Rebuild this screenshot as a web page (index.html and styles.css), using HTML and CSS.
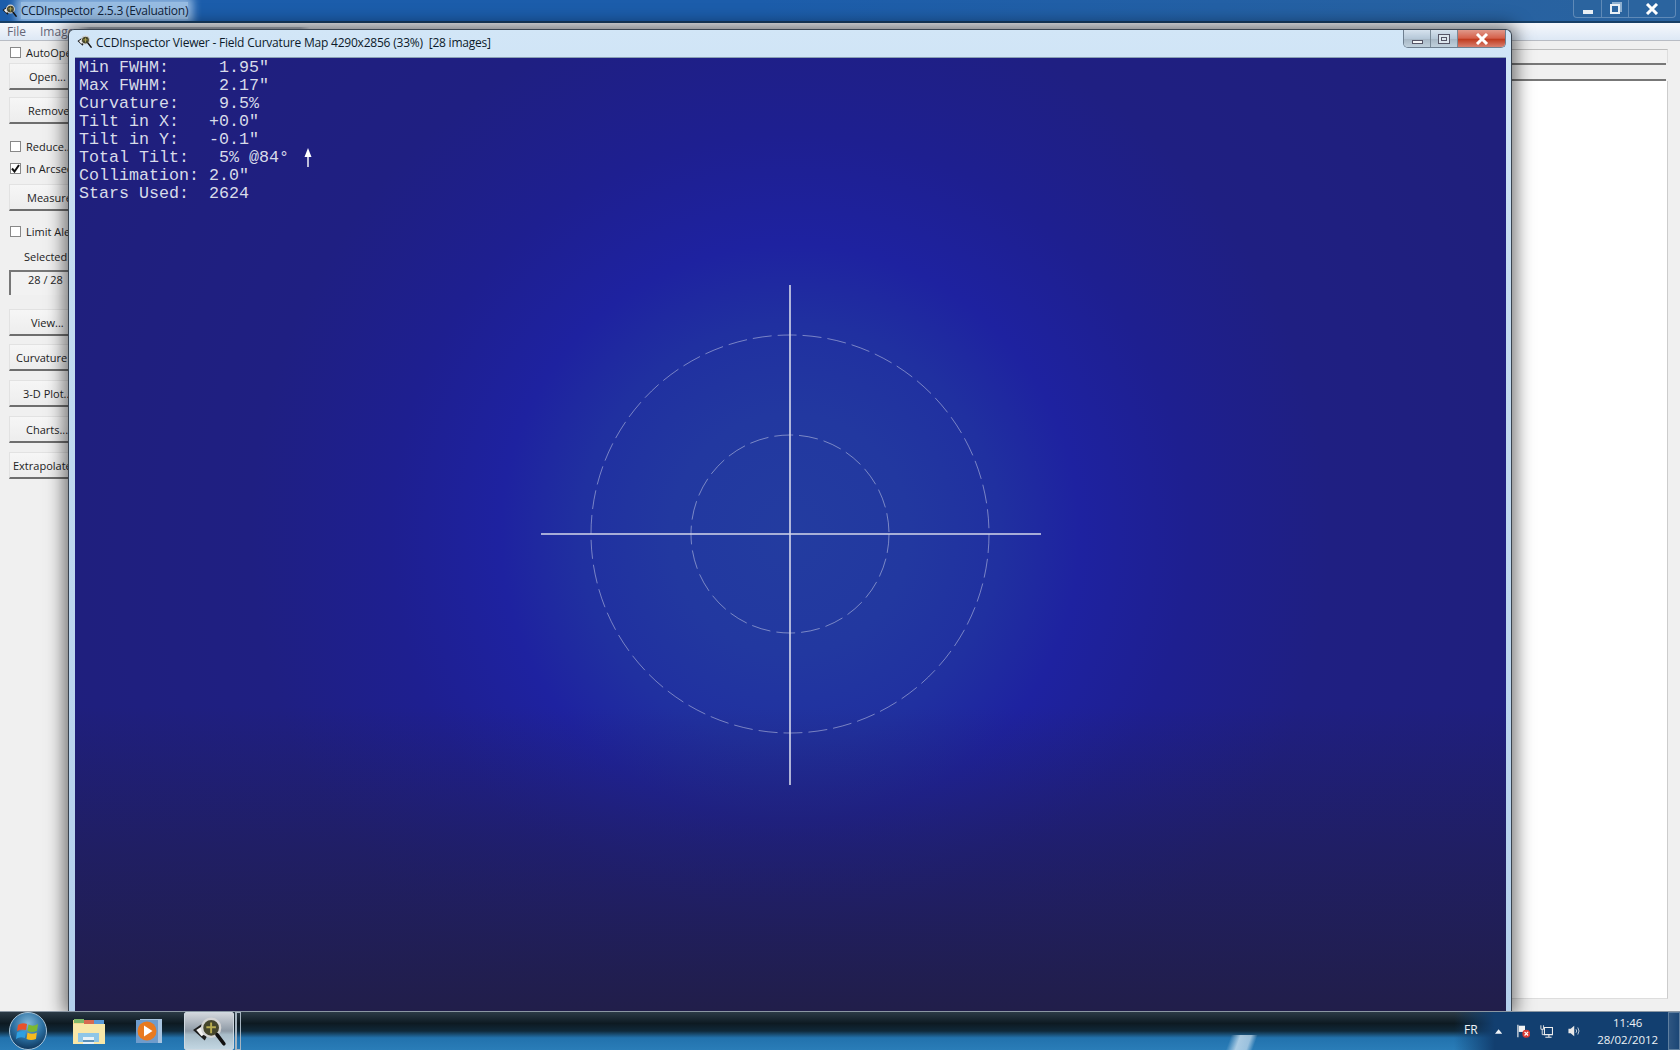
FILE: index.html
```html
<!DOCTYPE html>
<html lang="en">
<head>
<meta charset="utf-8">
<title>CCDInspector</title>
<link rel="stylesheet" href="styles.css">
</head>
<body>
<svg class="defs" width="0" height="0" aria-hidden="true">
  <symbol id="appicon" viewBox="0 0 32 32">
    <path d="M1 15 L14 6 L21 8 L12 25 Z" fill="#1c1c1c"/>
    <path d="M4 15 L11 10.500 L15 17 L9 21 Z" fill="#f2f2f2"/>
    <circle cx="18" cy="13" r="8.500" fill="#45452c" stroke="#d4d4d4" stroke-width="2.200"/>
    <path d="M18 8 V18 M13.500 12.500 H22.500" stroke="#b8ac50" stroke-width="1.800"/>
    <path d="M23.500 19.500 L30 28" stroke="#111" stroke-width="3.400" stroke-linecap="round"/>
  </symbol>
</svg>

<div class="main">
  <header class="apptitle">
    <svg class="tinyicon"><use href="#appicon"/></svg>
    <span class="apptitle-text">CCDInspector 2.5.3 (Evaluation)</span>
    <div class="capgroup">
      <span class="capbtn capmin"><i class="glyph-min"></i></span>
      <span class="capbtn capmax"><i class="glyph-restore"></i></span>
      <span class="capbtn capclose"><svg width="14" height="12" viewBox="0 0 14 12"><path d="M2 1 L12 11 M12 1 L2 11" stroke="#fff" stroke-width="3"/></svg></span>
    </div>
  </header>
  <nav class="menubar">
    <span>File</span><span>Image</span>
  </nav>
  <div class="client">
    <aside class="sidepanel">
      <label class="check c1"><i class="box"></i>AutoOpen</label>
      <div class="btn b1">Open...</div>
      <div class="btn b2">Remove</div>
      <label class="check c2"><i class="box"></i>Reduce...</label>
      <label class="check c3"><i class="box checked"><svg width="9" height="9" viewBox="0 0 9 9"><path d="M1 4.500 L3.500 7.500 L8 1" fill="none" stroke="#111" stroke-width="2"/></svg></i>In Arcsec</label>
      <div class="btn b3">Measure</div>
      <label class="check c4"><i class="box"></i>Limit Alerts</label>
      <div class="sel-label">Selected</div>
      <div class="sel-field">28 / 28</div>
      <div class="btn b4">View...</div>
      <div class="btn b5 left16">Curvature</div>
      <div class="btn b5 left23">3-D Plot...</div>
      <div class="btn b5 left26">Charts...</div>
      <div class="btn b5 left13">Extrapolate</div>
    </aside>
    <section class="rightpane">
      <div class="pane-head"></div>
      <div class="pane-tool"></div>
      <div class="pane-list"></div>
    </section>
  </div>
</div>

<div class="viewer">
  <header class="viewer-title">
    <svg class="tinyicon"><use href="#appicon"/></svg>
    <span class="viewer-title-text">CCDInspector Viewer - Field Curvature Map 4290x2856 (33%)  [28 images]</span>
    <div class="vcaps">
      <span class="vbtn"><i class="vglyph-min"></i></span>
      <span class="vbtn"><i class="vglyph-max"></i></span>
      <span class="vbtn vclose"><svg width="14" height="12" viewBox="0 0 14 12"><path d="M2 1 L12 11 M12 1 L2 11" stroke="#fff" stroke-width="3"/></svg></span>
    </div>
  </header>
  <div class="canvas">
    <pre class="stats">Min FWHM:     1.95"
Max FWHM:     2.17"
Curvature:    9.5%
Tilt in X:   +0.0"
Tilt in Y:   -0.1"
Total Tilt:   5% @84°
Collimation: 2.0"
Stars Used:  2624</pre>
    <svg class="plot" width="1431" height="954" viewBox="0 0 1431 954">
      <path d="M233 90 L229.500 99 L232.300 99 L232.300 109 L233.700 109 L233.700 99 L236.500 99 Z" fill="#fff"/>
      <circle cx="715" cy="476" r="199" class="ring"/>
      <circle cx="715" cy="476" r="99" class="ring"/>
      <path d="M715 227 V727 M466 476 H966" class="cross"/>
    </svg>
  </div>
</div>

<footer class="taskbar">
  <div class="orb">
    <svg width="40" height="40" viewBox="0 0 40 40">
      <defs>
        <radialGradient id="orbfill" cx="50%" cy="30%" r="75%"><stop offset="0" stop-color="#7fb6d8"/><stop offset=".55" stop-color="#2a6ea0"/><stop offset="1" stop-color="#0a2c50"/></radialGradient>
      </defs>
      <circle cx="20" cy="20" r="18.500" fill="url(#orbfill)" stroke="#a8c4d8" stroke-width="1"/>
      <path d="M10 14 Q14 11 19 13 L18 19 Q13 17.500 9 20 Z" fill="#e8512a"/>
      <path d="M20.500 13.500 Q25 16 30 13 L29 20 Q24 22 19.500 20 Z" fill="#7cb82f"/>
      <path d="M9 21.500 Q13 19 18 20.500 L17 27 Q12 25 8 28 Z" fill="#2e9fe0"/>
      <path d="M19.500 21.500 Q24 24 28.800 21.500 L28 28 Q23 30 18.500 28 Z" fill="#f6b91e"/>
    </svg>
  </div>
  <div class="tb-item">
    <svg width="34" height="30" viewBox="0 0 34 30">
      <path d="M1 4 H32 V28 H1 Z" fill="#f3da8c"/>
      <path d="M2 3 H12 V7 H2 Z" fill="#7fb86a"/><path d="M12 4 H22 V8 H12 Z" fill="#d86a50"/><path d="M22 4 H32 V8 H22 Z" fill="#5a9ad8"/>
      <path d="M1 8 H33 V28 H1 Z" fill="#f8e7a8"/>
      <path d="M6 17 H27 V26 H6 Z" fill="#8ec6e8"/><path d="M11 21 H22 V28 H11 Z" fill="#e8f2f8"/><path d="M11 24 H22 V26 H11 Z" fill="#5a90b8"/>
    </svg>
  </div>
  <div class="tb-item wmp">
    <svg width="28" height="26" viewBox="0 0 28 26">
      <rect x="5" y="1" width="22" height="24" fill="#a8c4e0"/>
      <rect x="1" y="2" width="22" height="23" fill="#6f9ccc"/>
      <circle cx="12" cy="13" r="9.500" fill="#e87a20"/>
      <path d="M9 7.500 L17.500 13 L9 18.500 Z" fill="#fff"/>
    </svg>
  </div>
  <div class="tb-item active">
    <svg class="active-icon"><use href="#appicon"/></svg>
  </div>
  <div class="stack-edge"></div>
  <div class="tray">
    <span class="lang">FR</span>
    <svg class="tray-up" width="8" height="5" viewBox="0 0 8 5"><path d="M0 5 L4 0 L8 5 Z" fill="#f0f4f8"/></svg>
    <svg width="15" height="15" viewBox="0 0 15 15"><path d="M1 0 V14" stroke="#eee" stroke-width="1.300"/><path d="M2 1 H9 V8 H2 Z" fill="#f4f4f4"/><circle cx="10.500" cy="10" r="4.500" fill="#d83a32"/><path d="M8.500 8 L12.500 12 M12.500 8 L8.500 12" stroke="#fff" stroke-width="1.300"/></svg>
    <svg width="15" height="15" viewBox="0 0 15 15"><path d="M5 3 H14 V11 H5 Z M10 11 V14 M6 14 H13" fill="none" stroke="#eee" stroke-width="1.200"/><path d="M1 0.500 V5 H4 V0.500" fill="none" stroke="#eee" stroke-width="1"/><path d="M2.500 5 V11 H5" fill="none" stroke="#eee"/></svg>
    <svg class="speaker" width="15" height="14" viewBox="0 0 15 14"><path d="M0.500 4.500 H3 L7 1 V13 L3 9.500 H0.500 Z" fill="#e8e8e8"/><path d="M9 5 Q10.500 7 9 9 M11 3 Q13.800 7 11 11" fill="none" stroke="#cfd8e0" stroke-width="1"/></svg>
    <div class="clock"><span>11:46</span><span>28/02/2012</span></div>
    <div class="showdesk"></div>
  </div>
</footer>
</body>
</html>
```

FILE: styles.css
```css
* { box-sizing: border-box; }
html, body { margin: 0; height: 100%; }
body {
  width: 1680px;
  height: 1050px;
  overflow: hidden;
  position: relative;
  display: flex;
  flex-direction: column;
  font-family: "Open Sans", "Noto Sans", sans-serif;
  font-size: 12px;
  color: #222;
  background: #f0f0f0;
}
.defs { position: absolute; }
.main { height: 1011px; display: flex; flex-direction: column; }

/* main window caption */
.apptitle {
  height: 23px;
  flex: none;
  display: flex;
  align-items: flex-start;
  background: linear-gradient(90deg, #1b5dab 0%, #1c5dab 45%, #2a639f 100%);
  border-bottom: 2px solid #173f66;
  padding-left: 2px;
  position: relative;
  overflow: hidden;
}
.tinyicon { width: 15px; height: 15px; flex: none; position: relative; }
.apptitle .tinyicon { margin-top: 3px; }
.apptitle-text {
  margin: 2px 0 0 4px;
  line-height: 17px;
  font-size: 12px;
  color: #10233a;
  letter-spacing: -.25px;
  background: rgba(165,198,232,.9);
  box-shadow: 0 0 9px 5px rgba(165,198,232,.85);
}
.capgroup {
  margin-left: auto;
  margin-right: 4px;
  display: flex;
  height: 18px;
  border: 1px solid #5f8ab8;
  border-top: 0;
  border-radius: 0 0 4px 4px;
  background: #2b649f;
}
.capbtn {
  display: flex;
  align-items: center;
  justify-content: center;
  height: 100%;
  border-right: 1px solid #5f8ab8;
}
.capbtn:last-child { border-right: 0; }
.capmin { width: 28px; }
.capmax { width: 27px; }
.capclose { width: 46px; }
.glyph-min { width: 10px; height: 4px; background: #e8eef4; margin-top: 6px; }
.glyph-restore {
  width: 10px; height: 10px;
  border: 2px solid #e8eef4;
  box-shadow: 2px -2px 0 0 #8fb0d0;
}

/* menu */
.menubar {
  height: 18px;
  flex: none;
  display: flex;
  gap: 14px;
  padding: 0 0 0 7px;
  align-items: center;
  color: #667;
  background:
    linear-gradient(90deg, rgba(120,130,145,0) 78px, rgba(120,130,145,.55) 90px, rgba(120,130,145,.45) 300px, rgba(120,130,145,0) 310px) 0 4px / 100% 2px no-repeat,
    linear-gradient(180deg, #f6f8fc 0%, #dde8f5 100%);
  border-bottom: 1px solid #b8bcc4;
}

/* client */
.client { flex: 1; display: flex; min-height: 0; background: #f0f0f0; }
.sidepanel {
  width: 80px;
  flex: none;
  position: relative;
  padding: 0 0 0 9px;
}
.check {
  display: flex;
  align-items: center;
  gap: 5px;
  height: 16px;
  white-space: nowrap;
  font-size: 11px;
  margin-left: 1px;
}
.box {
  width: 11px;
  height: 11px;
  flex: none;
  border: 1px solid #888;
  background: #fff;
  display: flex;
  align-items: center;
  justify-content: center;
}
.c1 { margin-top: 3px; }
.c2 { margin-top: 14px; }
.c3 { margin-top: 6px; }
.c4 { margin-top: 12px; }
.btn {
  height: 27px;
  width: 80px;
  background: linear-gradient(180deg, #f6f6f6 0%, #ededed 100%);
  border-top: 1px solid #e2e2e2;
  border-left: 1px solid #e2e2e2;
  border-bottom: 2px solid #6e6e6e;
  line-height: 25px;
  font-size: 11px;
  white-space: nowrap;
  padding-left: 19px;
}
.b1 { margin-top: 3px; }
.b2 { margin-top: 7px; padding-left: 18px; }
.b3 { margin-top: 8px; padding-left: 17px; }
.b4 { margin-top: 14px; padding-left: 21px; }
.b5 { margin-top: 8px; }
.b5 + .b5 { margin-top: 9px; }
.left16 { padding-left: 6px; }
.left23 { padding-left: 13px; }
.left26 { padding-left: 16px; }
.left13 { padding-left: 3px; }
.sel-label { margin: 10px 0 0 15px; height: 16px; line-height: 16px; font-size: 11px; white-space: nowrap; }
.sel-field {
  margin-top: 5px;
  height: 25px;
  width: 80px;
  border-top: 2px solid #777;
  border-left: 2px solid #777;
  padding-left: 17px;
  line-height: 15px;
  font-size: 11px;
  background: #f2f2f2;
}
.rightpane {
  margin-left: auto;
  width: 176px;
  display: flex;
  flex-direction: column;
  padding: 8px 12px 0 0;
}
.pane-head { height: 14px; border-top: 1px solid #bdbdbd; border-right: 1px solid #ddd; background: #f2f2f2; }
.pane-tool { height: 18px; border-top: 2px solid #777; border-bottom: 2px solid #777; background: #f0f0f0; margin-right: 2px; }
.pane-list { flex: 1; margin-bottom: 12px; background: #fff; border-right: 1px solid #ccc; border-bottom: 1px solid #ddd; }

/* viewer window */
.viewer {
  position: absolute;
  left: 68px;
  top: 29px;
  width: 1444px;
  height: 982px;
  display: flex;
  flex-direction: column;
  border: 1px solid #3a4450;
  border-bottom: 0;
  border-radius: 6px 6px 0 0;
  background: linear-gradient(180deg, #d2e6f7 0%, #c4dbf0 25%, #b4d0ec 100%);
  box-shadow: 0 0 18px 4px rgba(0,0,0,.55);
  padding: 0 5px 0 6px;
}
.viewer-title {
  height: 27px;
  flex: none;
  display: flex;
  align-items: flex-start;
  position: relative;
}
.viewer-title .tinyicon { margin: 4px 0 0 2px; }
.viewer-title-text {
  margin: 4px 0 0 4px;
  line-height: 17px;
  font-size: 12px;
  color: #0c1a2a;
  white-space: pre;
  letter-spacing: -.21px;
}
.vcaps {
  margin-left: auto;
  display: flex;
  height: 18px;
  border: 1px solid #6e7f90;
  border-top: 0;
  border-radius: 0 0 5px 5px;
  overflow: hidden;
}
.vbtn {
  display: flex;
  align-items: center;
  justify-content: center;
  width: 27px;
  background: linear-gradient(180deg, #d6e2ee 0%, #b6c8d8 50%, #a8b8c6 55%, #c0d0dc 100%);
  border-right: 1px solid #7a8a98;
}
.vclose {
  width: 47px;
  border-right: 0;
  background: linear-gradient(180deg, #e0988a 0%, #d5604a 48%, #c03c20 55%, #d88070 100%);
}
.vglyph-min { width: 11px; height: 4px; background: #f4f6f8; border: 1px solid #556; margin-top: 6px; }
.vglyph-max { width: 12px; height: 10px; border: 1px solid #556; background: #dce6ee; box-shadow: inset 0 0 0 2px #dce6ee, inset 0 0 0 3px #556; }
.canvas {
  flex: 1;
  position: relative;
  border-top: 1px solid #8aa0b4;
  background:
    linear-gradient(180deg, rgba(33,30,74,0) 68%, rgba(33,30,74,.5) 83%, #211e4a 100%),
    radial-gradient(circle at 715px 476px, #233ca0 0, #2238a0 120px, #2030a0 210px, #1e22a0 290px, #1e1f90 400px, #1f1f82 540px, #1f1f7c 800px);
}
.stats {
  margin: 0;
  position: absolute;
  left: 4px;
  top: 1px;
  font-family: "Liberation Mono", "DejaVu Sans Mono", monospace;
  font-size: 16.670px;
  line-height: 18px;
  color: #d8dbe9;
}
.plot { position: absolute; left: 0; top: 0; }
.ring { fill: none; stroke: rgba(255,255,255,.4); stroke-width: 1; stroke-dasharray: 19 6; }
.cross { fill: none; stroke: #d4d6ea; stroke-width: 1.600; }

/* taskbar */
.taskbar {
  height: 39px;
  flex: none;
  position: relative;
  display: flex;
  align-items: stretch;
  border-top: 1px solid #8b97a3;
  color: #eef2f6;
  background:
    linear-gradient(110deg, rgba(205,225,240,0) 1157px, rgba(205,225,240,.8) 1166px, rgba(205,225,240,.7) 1176px, rgba(205,225,240,0) 1182px) 0 100% / 100% 15px no-repeat,
    linear-gradient(180deg, #2b3a46 0%, #0d1a22 30%, #10293a 50%, #2272ad 68%, #2a7db8 100%);
}
.orb { width: 56px; flex: none; display: flex; align-items: center; justify-content: center; padding-bottom: 1px; }
.tb-item { width: 56px; flex: none; display: flex; align-items: center; justify-content: center; }
.tb-item:nth-child(2) { margin-left: 5px; }
.wmp { margin-left: 4px; margin-right: 7px; }
.active {
  width: 50px;
  border: 1px solid #cfd8e0;
  border-radius: 2px;
  background: linear-gradient(180deg, #d2d6dc 0%, #8e9aa6 50%, #a8bcc8 60%, #c2d6e2 100%);
}
.active-icon { width: 36px; height: 34px; }
.stack-edge { width: 6px; flex: none; border: 1px solid #a6b4c0; border-left-width: 2px; margin-left: 1px; }
.tray {
  margin-left: auto;
  width: 226px;
  display: flex;
  align-items: center;
  gap: 10px;
  padding-left: 10px;
  background: linear-gradient(90deg, rgba(16,60,110,0) 0, #123f70 18%, #123f70 100%);
}
.lang { font-size: 12px; margin-top: -4px; width: 13px; margin-right: 8px; }
.tray-up { margin: 0 5px 0 0; }
.speaker { margin-left: 4px; }
.clock { margin-left: 6px; width: 62px; display: flex; flex-direction: column; align-items: center; font-size: 11.500px; line-height: 17px; white-space: nowrap; }
.showdesk { margin-left: auto; width: 13px; height: 100%; border: 1px solid #5f7f9f; background: linear-gradient(90deg, rgba(255,255,255,.12), rgba(255,255,255,.04)); }
```
